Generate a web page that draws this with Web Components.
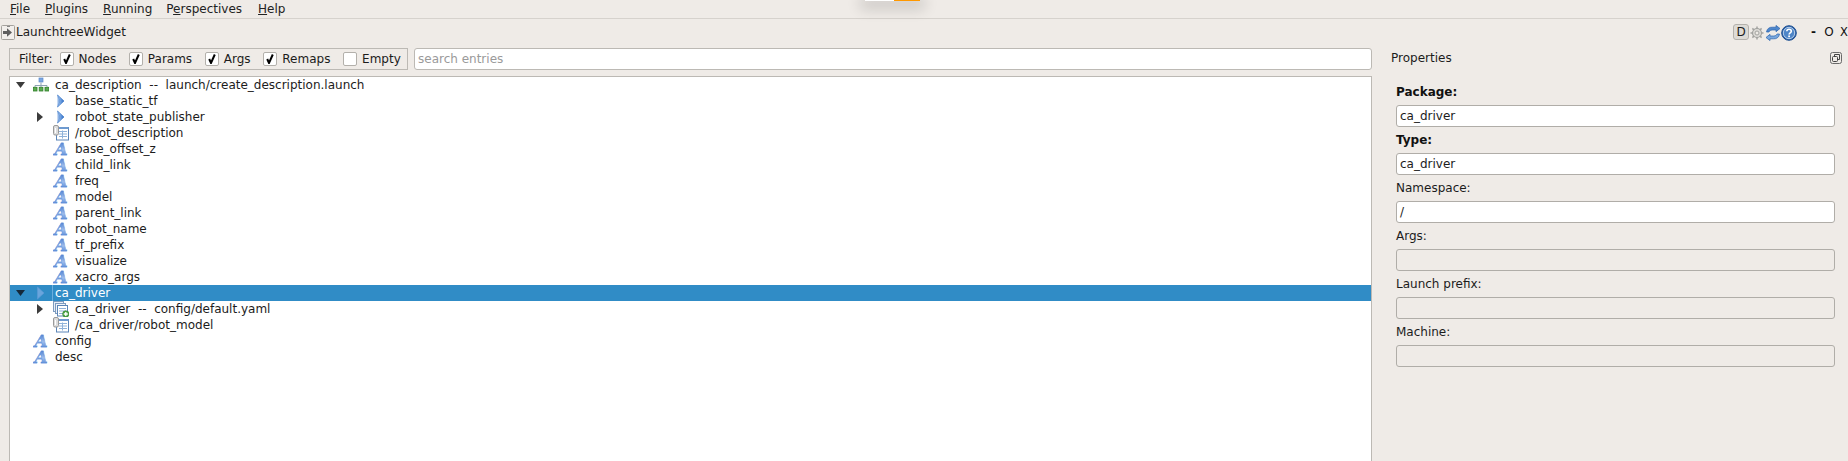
<!DOCTYPE html>
<html><head><meta charset="utf-8"><title>LaunchtreeWidget</title>
<style>
html,body{margin:0;padding:0;height:461px;overflow:hidden;background:#efebe7;}
body{font:12px/16px "DejaVu Sans",sans-serif;color:#1c1c1c;}
</style></head><body>
<rqt-app></rqt-app>
<script>
const SVG={
 launch:`<svg width="16" height="16" viewBox="0 0 16 16"><path d="M8 5.500V10M2 10V8.500h12V10" stroke="#8fa3b3" fill="none"/><rect x="6" y="1" width="4" height="4" fill="#7ba6e0" stroke="#5c8acb" stroke-width=".7"/><rect x=".3" y="10.300" width="3.700" height="3.700" fill="#5cab50" stroke="#2f8029" stroke-width=".8"/><rect x="6.200" y="10.300" width="3.700" height="3.700" fill="#5cab50" stroke="#2f8029" stroke-width=".8"/><rect x="12" y="10.300" width="3.700" height="3.700" fill="#5cab50" stroke="#2f8029" stroke-width=".8"/></svg>`,
 node:`<svg width="16" height="16" viewBox="0 0 16 16"><defs><linearGradient id="n" x1="0" x2="1" y1="0" y2="0"><stop offset="0" stop-color="#b4cef0"/><stop offset=".5" stop-color="#6a9de0"/><stop offset="1" stop-color="#2c68c0"/></linearGradient></defs><path d="M4.500 2 11 8 4.500 14 6.500 8Z" fill="url(#n)" stroke="#4a82cc" stroke-width=".8" stroke-linejoin="round"/><path d="M4.500 2.500 6.500 8 4.500 13.500Z" fill="#8db3e6"/></svg>`,
 nodeSel:`<svg width="16" height="16" viewBox="0 0 16 16"><path d="M4.500 2 11 8 4.500 14Z" fill="#6aa5dc" stroke="#5a9ad6" stroke-width=".7" stroke-linejoin="round"/></svg>`,
 doc:`<svg width="16" height="16" viewBox="0 0 16 16"><rect x="3.500" y="2.500" width="12" height="12.500" fill="#fff" stroke="#5c86b8"/><path d="M3.500 3h12" stroke="#6e9ad0" stroke-width="2"/><path d="M6 6.500h8M6 9h8M6 11.500h8M9.500 5.500v8" stroke="#8fb2d9"/><rect x=".5" y=".5" width="5" height="9.500" rx="1.500" fill="#dcdcdc" stroke="#9a9a9a"/><path d="M2.500 3v5" stroke="#fff"/></svg>`,
 group:`<svg width="16" height="16" viewBox="0 0 16 16"><rect x=".5" y=".5" width="10" height="10" fill="#e8eef6" stroke="#7e9cc0"/><rect x="2.500" y="2.500" width="10" height="10" fill="#eef3f9" stroke="#7e9cc0"/><rect x="4.500" y="4.500" width="10" height="10.500" fill="#fff" stroke="#5c86b8"/><path d="M6 7.500h7M6 10h7M6 12.500h4" stroke="#8fb2d9"/><circle cx="12.800" cy="13" r="3.200" fill="#4fa84a" stroke="#2f7d2a" stroke-width=".6"/><path d="M12.800 11v4M10.800 13h4" stroke="#fff" stroke-width="1.300"/></svg>`,
 gear:`<svg width="14" height="14" viewBox="0 0 14 14"><g stroke="#a3a3a0" fill="none"><circle cx="7" cy="7" r="4.500" stroke-width="1.200" fill="#dcdad6"/><circle cx="7" cy="7" r="2" fill="#efebe7"/><path d="M7 .5v2.500M7 11v2.500M.5 7H3M11 7h2.500M2.400 2.400l1.800 1.800M9.800 9.800l1.800 1.800M2.400 11.600l1.800-1.800M9.800 4.200l1.800-1.800" stroke-width="1.500"/></g></svg>`,
 refresh:`<svg width="16" height="16" viewBox="0 0 16 16"><path d="M1.500 7C2 3.500 4.500 2 7.500 2.200H11V.4l4 3.100-4 3.200V5H7.500C5.500 5 4.500 5.800 4 7Z" fill="#4f87cc" stroke="#2a62ac" stroke-width=".7" stroke-linejoin="round"/><path d="M14.500 9C14 12.500 11.500 14 8.500 13.800H5v1.800L1 12.500l4-3.200V11h3.500c2 0 3-.8 3.500-2Z" fill="#7aa8de" stroke="#2a62ac" stroke-width=".7" stroke-linejoin="round"/></svg>`,
 help:`<svg width="16" height="16" viewBox="0 0 16 16"><circle cx="8" cy="8" r="7.300" fill="#2f66ad" stroke="#1f4f90"/><circle cx="8" cy="8" r="5.700" fill="#4f86c8" stroke="#d5e3f4" stroke-width=".8"/><path d="M5.800 6.300C5.900 4.800 6.900 4.200 8 4.200c1.300 0 2.300.8 2.300 2 0 1.700-2.200 1.700-2.200 3.400" fill="none" stroke="#fff" stroke-width="1.600"/><rect x="7.200" y="10.500" width="1.800" height="1.700" fill="#fff"/></svg>`,
 float:`<svg width="12" height="12" viewBox="0 0 12 12"><rect x=".5" y=".5" width="11" height="11" rx="2" fill="#efebe7" stroke="#6a6a6a"/><rect x="2.500" y="4.500" width="5" height="5" rx="1" fill="none" stroke="#444"/><path d="M4.500 4.500v-2h5v5h-2" fill="none" stroke="#444"/></svg>`,
 back:`<svg width="14" height="15" viewBox="0 0 14 15"><rect x=".5" y=".5" width="13" height="14" rx="1" fill="#f2efec" stroke="#a5a29d"/><path d="M2 6h4V3.200L11 7.500 6 11.800V9H2Z" fill="#5f5f5f"/><path d="M6 1.500h3" stroke="#888"/></svg>`
};
function def(name,tpl,init){customElements.define(name,class extends HTMLElement{
  constructor(){super();this.attachShadow({mode:'open'}).innerHTML=typeof tpl==='function'?tpl(this):tpl;}
  connectedCallback(){if(init)init(this);}
});}

def('rqt-menubar',`<style>
:host{display:flex;height:18px;border-bottom:1px solid #d6d2cd;box-sizing:content-box;padding-left:10px;align-items:center}
span{margin-right:15px;line-height:17px;white-space:nowrap;color:#222}
</style><span><u>F</u>ile</span><span><u>P</u>lugins</span><span style="margin-right:14px"><u>R</u>unning</span><span style="margin-right:16px">P<u>e</u>rspectives</span><span><u>H</u>elp</span>`);

def('rqt-titlebar',`<style>
:host{display:flex;height:29px;box-sizing:border-box;padding:6px 0 0 1px;align-items:flex-start;overflow:hidden}
.ic{display:block;height:15px;width:15px;flex:none}
.t{line-height:15px;flex:1}
.d{width:16px;height:16px;box-sizing:border-box;border:1px solid #b4b1ac;border-radius:3px;background:#dedbd6;text-align:center;line-height:14px;margin-top:-1px;margin-right:1px;flex:none}
.i{display:block;flex:none}
.b{flex:none;text-align:center;line-height:15px;color:#111}
</style><span class="ic">${SVG.back}</span><span class="t">LaunchtreeWidget</span><span class="d">D</span><span class="i" style="margin-top:1px;margin-right:1px">${SVG.gear}</span><span class="i">${SVG.refresh}</span><span class="i">${SVG.help}</span><span class="b" style="width:15px;margin-left:9px;font-weight:700">-</span><span class="b" style="width:16px">O</span><span class="b" style="width:8px;margin-left:3px;font-size:11.500px">X</span>`);

def('rqt-check',h=>`<style>
:host{display:inline-flex;align-items:center;gap:5px;white-space:nowrap}
.box{width:14px;height:14px;box-sizing:border-box;border:1px solid #b3b0ab;border-radius:2px;background:#fff;display:block;flex:none}
svg{display:block;margin:1px 0 0 2px}
</style><span class="box">${h.hasAttribute('checked')?'<svg width="8" height="10" viewBox="0 0 8 10"><path d="M1.200 5 3 9 6.800 .5" fill="none" stroke="#000" stroke-width="2"/></svg>':''}</span><slot></slot>`);

def('rqt-filterbar',`<style>
:host{display:flex;gap:6px;height:22px}
.f{width:399px;box-sizing:border-box;flex:none;border:1px solid #bcb9b4;display:flex;align-items:center;padding-left:9px;gap:12.700px}
.f>span{margin-right:-5.700px}
.s{flex:1;box-sizing:border-box;border:1px solid #bcb9b4;border-radius:3px;background:#fff;color:#9a9a9a;padding-left:3px;line-height:20px}
</style><div class="f"><span>Filter:</span><rqt-check checked>Nodes</rqt-check><rqt-check checked>Params</rqt-check><rqt-check checked>Args</rqt-check><rqt-check checked>Remaps</rqt-check><rqt-check>Empty</rqt-check></div><div class="s">search entries</div>`);

def('tree-row',h=>{
 const lvl=+h.getAttribute('level')||0, tw=h.getAttribute('twist')||'', ic=h.getAttribute('icon'), sel=h.hasAttribute('selected');
 let t='';
 if(tw==='down')t=`<svg width="9" height="6" viewBox="0 0 9 6"><path d="M0 0h9L4.500 6Z" fill="${sel?'#14283a':'#3c3c3c'}"/></svg>`;
 if(tw==='right')t=`<svg width="6" height="10" viewBox="0 0 6 10"><path d="M0 0 6 5 0 10Z" fill="#3c3c3c"/></svg>`;
 const icon=ic==='param'?'<span class="A"></span>':SVG[ic]||'';
 return `<style>
:host{display:flex;height:16px;align-items:center;padding-left:${lvl*20}px;${sel?'background:#308cc6;color:#fff;':''}}
.tw{width:23px;height:16px;display:flex;align-items:center;justify-content:center;flex:none;box-sizing:border-box;padding-right:${tw==='down'?'3px':tw==='right'?'4px':'0'}}
.ic{width:16px;height:16px;flex:none;display:block}
.ic svg{display:block}
.A{display:block;width:16px;height:16px;overflow:hidden}
.A::before{content:"A";display:block;font:italic bold 17px/16px "DejaVu Serif",serif;text-align:center;background:linear-gradient(#3f75cc,#9dbdec 55%,#4f86d6);-webkit-background-clip:text;background-clip:text;color:transparent;-webkit-text-stroke:.35px #5a8ad6}
.x{margin-left:${sel?3:6}px;white-space:pre;${sel?'border-left:1px solid #6aaede;padding-left:2px;':''}}
</style><span class="tw">${t}</span><span class="ic">${icon}</span><span class="x"><slot></slot></span>`;
});

def('launch-tree',`<style>
:host{display:block;flex:1;min-height:0;background:#fff;border:1px solid #bcb9b4;border-bottom:none;overflow:hidden}
</style><slot></slot>`);

def('prop-field',h=>{
 const ro=h.hasAttribute('disabled');const b=h.hasAttribute('bold');
 return `<style>
:host{display:block}
.l{height:26px;line-height:26px;white-space:nowrap;${b?'font-weight:700;color:#111':''}}
.v{height:22px;box-sizing:border-box;border:1px solid #b0ada8;border-radius:3px;padding-left:3px;line-height:20px;background:${ro?'#efebe7':'#fff'}}
</style><div class="l">${h.getAttribute('label')}</div><div class="v">${h.getAttribute('value')||''}</div>`;
});

def('prop-panel',`<style>
:host{display:block;width:476px;flex:none;box-sizing:border-box;padding-right:13px;margin-top:-1px}
.h{display:flex;align-items:center;justify-content:space-between;height:32px;padding:0 6px 11px 19px;margin-right:-13px;box-sizing:border-box}
.h svg{display:block}
.c{padding-left:24px}
</style><div class="h"><span>Properties</span>${SVG.float}</div><div class="c"><slot></slot></div>`);

def('rqt-app',`<style>
:host{display:flex;flex-direction:column;height:461px;overflow:hidden;position:relative}
.m{display:flex;flex:1;min-height:0;padding-left:9px}
.l{width:1363px;flex:none;display:flex;flex-direction:column;gap:6px;min-height:0}
.pop{position:absolute;left:865px;top:0;width:55px;height:1px;display:flex;box-shadow:0 3px 14px 5px rgba(0,0,0,.16)}
.pop i{display:block;height:1px}
</style>
<rqt-menubar></rqt-menubar>
<rqt-titlebar></rqt-titlebar>
<div class="m"><div class="l"><rqt-filterbar></rqt-filterbar>
<launch-tree>
<tree-row level="0" twist="down" icon="launch">ca_description  --  launch/create_description.launch</tree-row>
<tree-row level="1" icon="node">base_static_tf</tree-row>
<tree-row level="1" twist="right" icon="node">robot_state_publisher</tree-row>
<tree-row level="1" icon="doc">/robot_description</tree-row>
<tree-row level="1" icon="param">base_offset_z</tree-row>
<tree-row level="1" icon="param">child_link</tree-row>
<tree-row level="1" icon="param">freq</tree-row>
<tree-row level="1" icon="param">model</tree-row>
<tree-row level="1" icon="param">parent_link</tree-row>
<tree-row level="1" icon="param">robot_name</tree-row>
<tree-row level="1" icon="param">tf_prefix</tree-row>
<tree-row level="1" icon="param">visualize</tree-row>
<tree-row level="1" icon="param">xacro_args</tree-row>
<tree-row level="0" twist="down" icon="nodeSel" selected>ca_driver</tree-row>
<tree-row level="1" twist="right" icon="group">ca_driver  --  config/default.yaml</tree-row>
<tree-row level="1" icon="doc">/ca_driver/robot_model</tree-row>
<tree-row level="0" icon="param">config</tree-row>
<tree-row level="0" icon="param">desc</tree-row>
</launch-tree></div>
<prop-panel>
<prop-field bold label="Package:" value="ca_driver"></prop-field>
<prop-field bold label="Type:" value="ca_driver"></prop-field>
<prop-field label="Namespace:" value="/"></prop-field>
<prop-field disabled label="Args:"></prop-field>
<prop-field disabled label="Launch prefix:"></prop-field>
<prop-field disabled label="Machine:"></prop-field>
</prop-panel></div>
<div class="pop"><i style="width:29px;background:#fff"></i><i style="width:26px;background:#ff9800"></i></div>`);
</script>
</body></html>
